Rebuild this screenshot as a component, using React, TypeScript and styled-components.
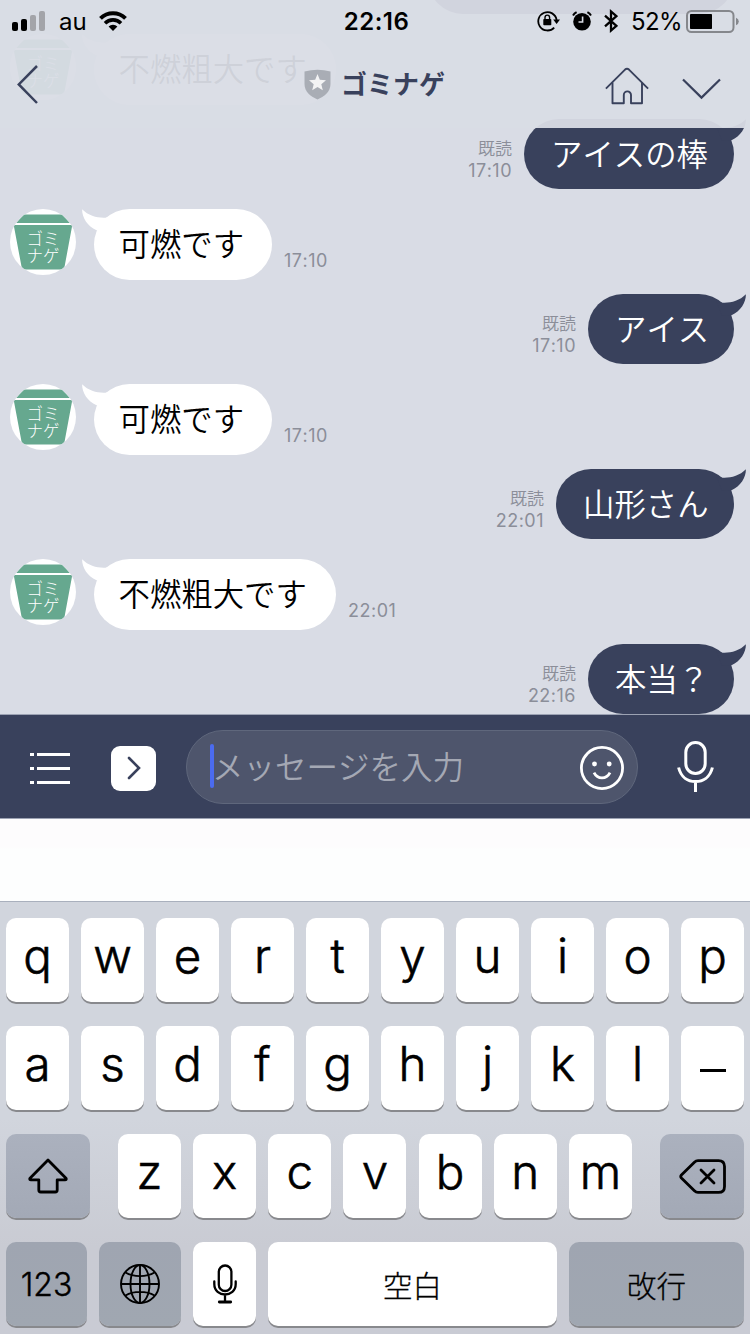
import React from 'react';
import styled, { createGlobalStyle } from 'styled-components';

const navy = '#39415c';
const latin = `Inter, "Noto Sans CJK JP", sans-serif`;
const japanese = `"Noto Sans CJK JP", sans-serif`;

const GlobalStyle = createGlobalStyle`
  * { box-sizing: border-box; }
  body { margin: 0; font-family: ${latin}; font-kerning: none; }
  button { font-kerning: none; }
  svg { display: block; flex: none; }
`;

const Screen = styled.div`
  position: relative;
  width: 750px;
  height: 1334px;
  overflow: hidden;
  display: flex;
  flex-direction: column;
  background: #d9dce5;
`;

const Spacer = styled.span<{ $w: number }>`
  flex: none;
  width: ${(p) => p.$w}px;
`;

/* ---------- header ---------- */

const Header = styled.header`
  position: absolute;
  inset: 0 0 auto 0;
  height: 128px;
  background: rgba(217, 220, 229, 0.95);
`;

const StatusBar = styled.div`
  display: grid;
  grid-template-columns: 1fr auto 1fr;
  align-items: center;
  height: 40px;
  padding: 0 11px 0 12px;
  color: #000;
  font-size: 24px;
  line-height: 40px;
`;

const StatusGroup = styled.div<{ $end?: boolean }>`
  display: flex;
  align-items: center;
  justify-content: ${(p) => (p.$end ? 'flex-end' : 'flex-start')};
  height: 40px;
`;

const Carrier = styled.span`
  margin: 0 13px 0 14px;
  padding-top: 2px;
  width: 27px;
`;

const Clock = styled.time`
  padding: 2px 0 0 2px;
  font-weight: 600;
  letter-spacing: 0.5px;
`;

const BatteryText = styled.span`
  margin: 0 7px 0 13px;
  padding-top: 2px;
  width: 48px;
  letter-spacing: -0.6px;
  white-space: nowrap;
`;

const NavBar = styled.nav`
  display: grid;
  grid-template-columns: 1fr auto 1fr;
  align-items: center;
  height: 88px;
  padding: 0 29px 0 16px;
`;

const TitleGroup = styled.div`
  display: flex;
  align-items: center;
  gap: 10px;
  margin-left: 12px;
`;

const Title = styled.h1`
  margin: 0;
  padding-bottom: 2px;
  font: 700 26px/30px ${japanese};
  font-kerning: none;
  color: ${navy};
`;

const NavActions = styled.div`
  display: flex;
  justify-content: flex-end;
  align-items: flex-end;
  height: 42px;
  gap: 33px;
`;

/* ---------- chat ---------- */

const Chat = styled.main`
  flex: none;
  height: 714px;
  overflow: hidden;
  display: flex;
  flex-direction: column;
  justify-content: flex-end;
`;

const MessageRow = styled.div<{ $own: boolean }>`
  flex: none;
  display: flex;
  justify-content: ${(p) => (p.$own ? 'flex-end' : 'flex-start')};
  height: ${(p) => (p.$own ? 70 : 71)}px;
  margin-top: ${(p) => (p.$own ? 14 : 20)}px;
  padding: 0 16px 0 10px;
  gap: 12px;
`;

const Bubble = styled.div<{ $own: boolean; $chars: number }>`
  position: relative;
  width: ${(p) => p.$chars * 32 + 50}px;
  height: 100%;
  padding-left: ${(p) => (p.$own ? 27 : 24.5)}px;
  margin-left: ${(p) => (p.$own ? 0 : 6)}px;
  border-radius: 36px;
  background: ${(p) => (p.$own ? navy : '#fff')};
  color: ${(p) => (p.$own ? '#fff' : '#000')};
  font: 350 31.4px/67px ${japanese};
  font-kerning: none;
  white-space: nowrap;
`;

const Tail = styled.svg<{ $own: boolean }>`
  position: absolute;
  top: 0;
  ${(p) => (p.$own ? 'right: -12px;' : 'left: -12px; transform: scaleX(-1);')}
`;

const Meta = styled.div<{ $own: boolean }>`
  display: flex;
  flex-direction: column;
  justify-content: flex-end;
  align-items: ${(p) => (p.$own ? 'flex-end' : 'flex-start')};
  padding-bottom: ${(p) => (p.$own ? 7 : 8)}px;
  color: #8b8e99;
  font-size: 18px;
  line-height: 22px;
  letter-spacing: 0.5px;
`;

const Read = styled.span`
  margin-bottom: 1px;
  font: 350 17px/22px ${japanese};
  letter-spacing: 0;
`;

const Avatar = styled.div`
  position: relative;
  flex: none;
  width: 66px;
  height: 66px;
  border-radius: 50%;
  overflow: hidden;
  background: #fff;
`;

const AvatarLabel = styled.div`
  position: absolute;
  inset: 21px 0 0 0;
  color: #fff;
  font: 300 16.5px/16.8px ${japanese};
  font-kerning: none;
  text-align: center;
`;

/* ---------- composer ---------- */

const Composer = styled.div`
  flex: none;
  display: flex;
  align-items: center;
  height: 105px;
  padding: 0 36px 0 30px;
  background: ${navy};
  border-top: 1px solid #9ca2b3;
  border-bottom: 1px solid #9ca2b3;
`;

const MenuButton = styled.button`
  padding: 3px 0 0;
  border: 0;
  background: none;
`;

const ExpandButton = styled.button`
  display: flex;
  align-items: center;
  justify-content: center;
  width: 45px;
  height: 45px;
  margin: 3px 30px 0 41px;
  padding: 0 0 0 1px;
  border: 0;
  border-radius: 9px;
  background: #fff;
`;

const Field = styled.div`
  display: flex;
  align-items: center;
  width: 452px;
  height: 74px;
  padding: 0 13px 2px 23px;
  border: 1px solid #5f677c;
  border-radius: 37px;
  background: #4e556c;
`;

const Caret = styled.span`
  width: 4px;
  height: 44px;
  border-radius: 2px;
  background: #4b6bef;
`;

const Placeholder = styled.span`
  flex: 1;
  margin-left: -2px;
  padding-bottom: 2px;
  color: #a4a8b4;
  font: 350 31.5px/44px ${japanese};
  font-kerning: none;
  white-space: nowrap;
`;

const EmojiButton = styled.button`
  padding: 4px 0 0;
  border: 0;
  background: none;
`;

const Suggestions = styled.div`
  flex: none;
  height: 83px;
  background: linear-gradient(#fdfcfd 0 28px, #fdfefe 30px);
  border-bottom: 1px solid #a9b0bd;
`;

/* ---------- keyboard ---------- */

const Keyboard = styled.section`
  flex: 1;
  display: flex;
  flex-direction: column;
  gap: 24px;
  padding: 16px 6px 8px;
  background: linear-gradient(#d1d5dd 0%, #d1d5dd 50%, #c9cbd3 80%, #c9cbd4 100%);
`;

const KeyRow = styled.div`
  display: flex;
  justify-content: space-between;
  height: 84px;
`;

const LetterGroup = styled.div`
  display: flex;
  justify-content: space-between;
  width: 514px;
`;

const Key = styled.button<{ $w?: number; $tone?: 'mid' | 'dark' }>`
  display: flex;
  align-items: center;
  justify-content: center;
  width: ${(p) => p.$w ?? 63}px;
  height: 84px;
  padding: 0 0 8px;
  border: 0;
  border-radius: 10px;
  background: ${(p) =>
    p.$tone === 'mid'
      ? 'linear-gradient(#abb1be, #a3a9b6)'
      : p.$tone === 'dark'
        ? 'linear-gradient(#9fa5b1, #a0a7b1)'
        : '#fff'};
  box-shadow: 0 2px 0 #88898d;
  color: #000;
  font: 300 47.5px/60px ${latin};
  -webkit-text-stroke: 0.6px #000;
`;

const ActionKey = styled(Key)`
  padding: 0;
  font-size: 32px;
`;

const NumberKey = styled(ActionKey)`
  padding-top: 2px;
  -webkit-text-stroke-width: 0.4px;
`;

const WordKey = styled(Key)`
  padding: 0;
  font: 300 29.5px/40px ${japanese};
  -webkit-text-stroke-width: 0.3px;
`;

const Dash = styled.span`
  width: 26px;
  height: 3px;
  margin-top: 12px;
  background: #000;
`;

/* ---------- icons ---------- */

const SignalIcon = () => (
  <svg width="33" height="20" viewBox="0 0 33 20">
    <rect x="0" y="11" width="6" height="9" rx="2" />
    <rect x="9" y="8" width="6" height="12" rx="2" />
    <rect x="18" y="4" width="6" height="16" rx="2" fill="#a3a4a9" />
    <rect x="27" y="0" width="6" height="20" rx="2" fill="#a3a4a9" />
  </svg>
);

const WifiIcon = () => (
  <svg width="28" height="20" viewBox="0 0 28 20">
    <path d="M1.5 7.4a18 18 0 0 1 25 0" fill="none" stroke="#000" strokeWidth="4" />
    <path d="M6 12.200a11.400 11.400 0 0 1 16 0" fill="none" stroke="#000" strokeWidth="3.600" />
    <path d="M14 20l-4.400-4.500a6.200 6.200 0 0 1 8.800 0z" />
  </svg>
);

const RotationLockIcon = () => (
  <svg width="23" height="22" viewBox="0 0 23 22">
    <path d="M17.200 17.600A9.200 9.200 0 1 1 19.600 10" fill="none" stroke="#000" strokeWidth="1.800" />
    <path d="M16.200 9.500h6.800l-3.400 4.400z" />
    <rect x="6.300" y="9" width="8" height="6.200" rx="0.800" />
    <path d="M8 9.500V7.400a2.300 2.300 0 0 1 4.600 0v2.100" fill="none" stroke="#000" strokeWidth="1.400" />
  </svg>
);

const AlarmIcon = () => (
  <svg width="20" height="20" viewBox="0 0 20 20">
    <circle cx="10" cy="10.700" r="8.800" />
    <path d="M10.600 5.500v5.500H6.500" fill="none" stroke="#d9dce5" strokeWidth="1.600" />
    <path d="M1 4.600A9 9 0 0 1 4.600 1.200M19 4.600A9 9 0 0 0 15.400 1.200" fill="none" stroke="#000" strokeWidth="2" />
  </svg>
);

const BluetoothIcon = () => (
  <svg width="14" height="24" viewBox="0 0 14 24">
    <path d="M1 6.600l11.400 10.200L7 21.500v-19l5.400 4.700L1 17.400" fill="none" stroke="#000" strokeWidth="2.300" />
  </svg>
);

const BatteryIcon = () => (
  <svg width="53" height="24" viewBox="0 0 53 24">
    <rect x="1" y="2" width="46.500" height="21" rx="4.500" fill="none" stroke="#85878c" strokeWidth="2" />
    <rect x="4" y="5" width="22" height="15" rx="0.800" />
    <path d="M50 8.800q2.800 1.200 2.800 3.700T50 16.200z" fill="#85878c" />
  </svg>
);

const BackIcon = () => (
  <svg width="24" height="40" viewBox="0 0 24 40">
    <path d="M21 2L2.800 20.400 21 39" fill="none" stroke={navy} strokeWidth="2.500" />
  </svg>
);

const ShieldIcon = () => (
  <svg width="27" height="31" viewBox="0 0 27 31">
    <path d="M.5 2.400Q13.500-.8 26.500 2.400V15c0 8-6.600 12.600-13 15.400C7 27.600.5 23 .5 15z" fill="#a9adb5" />
    <path d="M13.500 5l2.300 5.700 6.200.5-4.700 4 1.500 6-5.300-3.300-5.300 3.300 1.500-6-4.700-4 6.200-.5z" fill="#f3f3f4" />
  </svg>
);

const HomeIcon = () => (
  <svg width="44" height="38" viewBox="0 0 44 38">
    <g fill="none" stroke={navy} strokeWidth="1.900" strokeLinejoin="round">
      <path d="M.9 21.600L19.800 2.800q2.200-1.900 4.400 0L43.100 21.600" />
      <path d="M7.500 15.500v20.700h11.300V28a3.600 3.600 0 0 1 7.200 0v8.200h11V15.500" />
    </g>
  </svg>
);

const DownIcon = () => (
  <svg width="39" height="27" viewBox="0 0 39 27">
    <path d="M1 1.500L19.500 19.600 38 1.500" fill="none" stroke={navy} strokeWidth="2.200" />
  </svg>
);

const ListIcon = () => (
  <svg width="40" height="31" viewBox="0 0 40 31" fill="#fff">
    <path d="M0 0h4v3H0zM7 0h33v3H7zM0 14h4v3H0zM7 14h33v3H7zM0 28h4v3H0zM7 28h33v3H7z" />
  </svg>
);

const ChevronIcon = () => (
  <svg width="16" height="24" viewBox="0 0 16 24">
    <path d="M3 2l10 10L3 22" fill="none" stroke={navy} strokeWidth="2.600" strokeLinecap="round" />
  </svg>
);

const SmileIcon = () => (
  <svg width="44" height="44" viewBox="0 0 44 44">
    <circle cx="22" cy="22" r="20.600" fill="none" stroke="#fff" strokeWidth="2.800" />
    <circle cx="14.500" cy="18" r="2.400" fill="#fff" />
    <circle cx="29.200" cy="18" r="2.400" fill="#fff" />
    <path d="M14 26.600c3.600 7 12.400 7 16 0" fill="none" stroke="#fff" strokeWidth="2.800" />
  </svg>
);

const MicIcon = () => (
  <svg width="37" height="51" viewBox="0 0 37 51">
    <g fill="none" stroke="#fff" strokeWidth="3">
      <rect x="8.800" y="1.500" width="19.400" height="31" rx="9.700" />
      <path d="M1.600 26.500C4 36.500 11 40.500 18.500 40.500S33 36.500 35.400 26.500M18.500 40.500V51" />
    </g>
  </svg>
);

const ShiftIcon = () => (
  <svg width="40" height="36" viewBox="0 0 40 36">
    <path
      d="M20 2L2 20.200q-.8 1.600 1 1.600h7.800V32q0 2 2 2h14.400q2 0 2-2V21.800H37q1.800 0 1-1.600z"
      fill="none" stroke="#000" strokeWidth="2.800" strokeLinejoin="round"
    />
  </svg>
);

const DeleteIcon = () => (
  <svg width="47" height="35" viewBox="0 0 47 35">
    <g fill="none" stroke="#000" strokeWidth="2.800" strokeLinecap="round" strokeLinejoin="round">
      <path d="M19 1.600h20.500q6 0 6 6v19.800q0 6-6 6H19q-2 0-3.600-1.600L2.400 19q-1.300-1.500 0-3l13-12.800Q17 1.600 19 1.600z" />
      <path d="M22 11l13 13M35 11L22 24" />
    </g>
  </svg>
);

const GlobeIcon = () => (
  <svg width="40" height="40" viewBox="0 0 40 40">
    <g fill="none" stroke="#000" strokeWidth="1.900">
      <circle cx="20" cy="20" r="19" />
      <ellipse cx="20" cy="20" rx="9.500" ry="19" />
      <path d="M20 1v38M1 20h38M5.500 8.500c8 4.800 21 4.800 29 0M5.500 31.500c8-4.800 21-4.800 29 0" />
    </g>
  </svg>
);

const DictationIcon = () => (
  <svg width="24" height="40" viewBox="0 0 24 40">
    <g fill="none" stroke="#000" strokeWidth="2.300" strokeLinecap="round">
      <rect x="5.800" y="1.500" width="12.600" height="25.500" rx="6.300" />
      <path d="M1.300 17.500V20c0 14 21.400 14 21.400 0v-2.500M12 31v6" />
      <path d="M6.300 38h11.400" strokeWidth="2.800" />
    </g>
  </svg>
);

const BinIcon = () => (
  <svg width="66" height="66" viewBox="0 0 66 66" fill="#66a88f">
    <path d="M14 5.500h38L60 14H6z" />
    <path d="M3.700 16h58.600L54.600 57.500q-.6 3-3.500 3H15q-3 0-3.500-3z" />
  </svg>
);

/* ---------- composition ---------- */

type Message = { own: boolean; text: string; time?: string; chars?: number };

const messages: Message[] = [
  { own: true, text: '', chars: 8 },
  { own: false, text: '不燃粗大です' },
  { own: true, text: 'アイスの棒', time: '17:10' },
  { own: false, text: '可燃です', time: '17:10' },
  { own: true, text: 'アイス', time: '17:10' },
  { own: false, text: '可燃です', time: '17:10' },
  { own: true, text: '山形さん', time: '22:01' },
  { own: false, text: '不燃粗大です', time: '22:01' },
  { own: true, text: '本当？', time: '22:16' },
];

const MessageItem = ({ own, text, time, chars }: Message) => {
  const bubble = (
    <Bubble $own={own} $chars={chars ?? text.length}>
      <Tail $own={own} width="30" height="24" viewBox="0 0 30 24" fill={own ? navy : '#fff'}>
        <path d="M0 6L6.500 8.700C14 9.200 23.500 7 29.900 .3C30 9 24.500 17 15.500 21.300L6 22z" />
      </Tail>
      {text}
    </Bubble>
  );
  const meta = time && (
    <Meta $own={own}>
      {own && <Read>既読</Read>}
      <span>{time}</span>
    </Meta>
  );
  return (
    <MessageRow $own={own}>
      {own ? (
        <>
          {meta}
          {bubble}
        </>
      ) : (
        <>
          <Avatar>
            <BinIcon />
            <AvatarLabel>
              ゴミ
              <br />
              ナゲ
            </AvatarLabel>
          </Avatar>
          {bubble}
          {meta}
        </>
      )}
    </MessageRow>
  );
};

const letters = (row: string) => row.split('').map((c) => <Key key={c}>{c}</Key>);

export default function App() {
  return (
    <Screen>
      <GlobalStyle />
      <Chat>
        {messages.map((m, i) => (
          <MessageItem key={i} {...m} />
        ))}
      </Chat>
      <Header>
        <StatusBar>
          <StatusGroup>
            <SignalIcon />
            <Carrier>au</Carrier>
            <WifiIcon />
          </StatusGroup>
          <Clock>22:16</Clock>
          <StatusGroup $end>
            <RotationLockIcon />
            <Spacer $w={12} />
            <AlarmIcon />
            <Spacer $w={12} />
            <BluetoothIcon />
            <BatteryText>52%</BatteryText>
            <BatteryIcon />
          </StatusGroup>
        </StatusBar>
        <NavBar>
          <BackIcon />
          <TitleGroup>
            <ShieldIcon />
            <Title>ゴミナゲ</Title>
          </TitleGroup>
          <NavActions>
            <HomeIcon />
            <DownIcon />
          </NavActions>
        </NavBar>
      </Header>
      <Composer>
        <MenuButton>
          <ListIcon />
        </MenuButton>
        <ExpandButton>
          <ChevronIcon />
        </ExpandButton>
        <Field>
          <Caret />
          <Placeholder>メッセージを入力</Placeholder>
          <EmojiButton>
            <SmileIcon />
          </EmojiButton>
        </Field>
        <Spacer $w={39} />
        <MicIcon />
      </Composer>
      <Suggestions />
      <Keyboard>
        <KeyRow>{letters('qwertyuiop')}</KeyRow>
        <KeyRow>
          {letters('asdfghjkl')}
          <Key>
            <Dash />
          </Key>
        </KeyRow>
        <KeyRow>
          <ActionKey $w={84} $tone="mid">
            <ShiftIcon />
          </ActionKey>
          <LetterGroup>{letters('zxcvbnm')}</LetterGroup>
          <ActionKey $w={84} $tone="mid">
            <DeleteIcon />
          </ActionKey>
        </KeyRow>
        <KeyRow>
          <NumberKey $w={81} $tone="dark">123</NumberKey>
          <ActionKey $w={82} $tone="dark">
            <GlobeIcon />
          </ActionKey>
          <ActionKey>
            <DictationIcon />
          </ActionKey>
          <WordKey $w={289}>空白</WordKey>
          <WordKey $w={175} $tone="dark">改行</WordKey>
        </KeyRow>
      </Keyboard>
    </Screen>
  );
}
